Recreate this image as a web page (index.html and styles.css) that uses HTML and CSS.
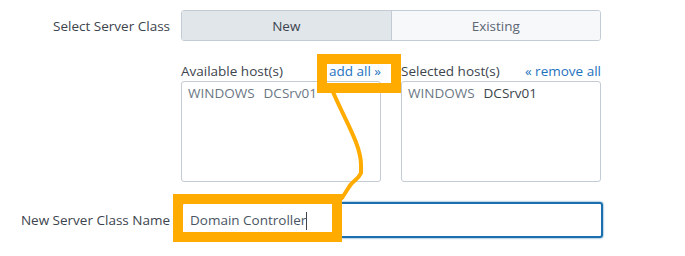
FILE: index.html
```html
<!DOCTYPE html>
<html lang="en">
<head>
  <meta charset="UTF-8" />
  <title>Add Server Class</title>
  <link rel="stylesheet" href="styles.css">
</head>
<body>
  <div class="form">
    <div class="form-row row-class">
      <label class="form-label">Select Server Class</label>
      <div class="seg">
        <button class="seg-btn active">New</button>
        <button class="seg-btn">Existing</button>
      </div>
    </div>

    <div class="form-row row-hosts">
      <div class="form-label"></div>
      <div class="hosts">
        <div class="host-col">
          <div class="host-head">
            <span>Available host(s)</span>
            <a class="host-link" href="#">add all &raquo;</a>
          </div>
          <div class="host-list">
            <div class="host-item"><span class="host-os">WINDOWS</span><span class="host-name">DCSrv01</span></div>
          </div>
        </div>
        <div class="host-col">
          <div class="host-head">
            <span>Selected host(s)</span>
            <a class="host-link" href="#">&laquo; remove all</a>
          </div>
          <div class="host-list">
            <div class="host-item selected"><span class="host-os">WINDOWS</span><span class="host-name">DCSrv01</span></div>
          </div>
        </div>
      </div>
    </div>

    <div class="form-row row-name">
      <label class="form-label">New Server Class Name</label>
      <div class="text-input">Domain Controller<span class="caret"></span></div>
    </div>

    <!-- annotation overlay -->
    <div class="mark mark-add"></div>
    <div class="mark mark-name"></div>
    <svg class="mark-line" width="685" height="256" viewBox="0 0 685 256">
      <path d="M333 92 C 345 120, 361 145, 361 165 L 361 173 C 358 180, 352 181, 349 187 L 342 198" fill="none" stroke="#ffab00" stroke-width="4" stroke-linecap="round" stroke-linejoin="round" />
    </svg>
  </div>
</body>
</html>
```

FILE: styles.css
```css
body, html {
  margin: 0;
  padding: 0;
  background: #fff;
  font-family: 'Open Sans', sans-serif;
  font-size: 13.5px;
  color: #3c444d;
}
.form {
  position: relative;
  width: 685px;
  height: 256px;
  padding-top: 10px;
  box-sizing: border-box;
}
.form-row {
  display: flex;
  align-items: center;
}
.form-label {
  width: 170px;
  padding-right: 11px;
  text-align: right;
  color: #3c444d;
  flex-shrink: 0;
}
.seg {
  display: flex;
  width: 420px;
  height: 31px;
  border: 1px solid #c3cbd4;
  border-radius: 3px;
  box-sizing: border-box;
  overflow: hidden;
}
.seg-btn {
  flex: 1;
  border: none;
  background: #f7f8fa;
  font-family: inherit;
  font-size: 13.5px;
  color: #5c6773;
  padding: 0;
}
.seg-btn.active {
  background: #e1e6eb;
  color: #3c444d;
  border-right: 1px solid #c3cbd4;
}
.row-hosts {
  margin-top: 20px;
  align-items: flex-start;
}
.hosts {
  display: flex;
  gap: 20px;
}
.host-col {
  width: 200px;
}
.host-head {
  display: flex;
  justify-content: space-between;
  height: 20px;
  line-height: 20px;
}
.host-link {
  color: #1e73be;
  text-decoration: none;
}
.host-list {
  height: 101px;
  border: 1px solid #c3cbd4;
  border-radius: 3px;
  box-sizing: border-box;
  padding: 2px 6px;
}
.host-item {
  color: #6b7785;
  line-height: 18px;
}
.host-os {
  margin-right: 9px;
}
.host-item.selected .host-name {
  color: #3c444d;
}
.row-name {
  margin-top: 20px;
}
.text-input {
  width: 422px;
  height: 36px;
  line-height: 32px;
  border: 2px solid #1b6fae;
  border-radius: 3px;
  box-sizing: border-box;
  padding: 0 7px;
  color: #4a5563;
  box-shadow: 0 0 2px #1b6fae;
}
.caret {
  display: inline-block;
  width: 1px;
  height: 18px;
  background: #3c444d;
  vertical-align: middle;
}
.mark {
  position: absolute;
  border: 10px solid #ffab00;
  box-sizing: border-box;
}
.mark-add {
  left: 317px;
  top: 54px;
  width: 84px;
  height: 39px;
}
.mark-name {
  left: 173px;
  top: 194px;
  width: 169px;
  height: 48px;
}
.mark-line {
  position: absolute;
  left: 0;
  top: 0;
  pointer-events: none;
}
```
